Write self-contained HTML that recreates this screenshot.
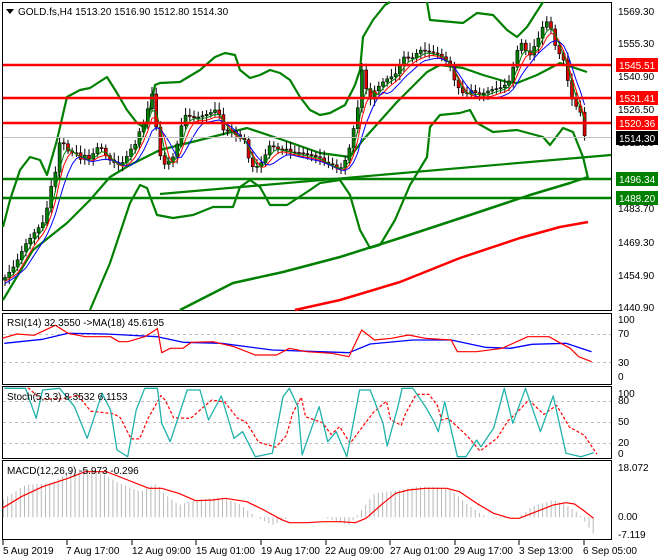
<!DOCTYPE html>
<html><head><meta charset="utf-8"><style>
html,body{margin:0;padding:0;background:#fff;}
svg{display:block;font-family:"Liberation Sans",sans-serif;}
text{font-size:10px;fill:#000;}
</style></head><body>
<svg id="s" width="660" height="560" xmlns="http://www.w3.org/2000/svg">
<rect width="660" height="560" fill="#fff"/>
<rect x="2.5" y="2.5" width="609" height="308" fill="none" stroke="#000"/>
<rect x="2.5" y="313.5" width="609" height="71" fill="none" stroke="#000"/>
<rect x="2.5" y="386.5" width="609" height="72" fill="none" stroke="#000"/>
<rect x="2.5" y="460.5" width="609" height="79" fill="none" stroke="#000"/>
<g id="main"></g>
<line x1="3" y1="137.5" x2="611" y2="137.5" stroke="#c0c0c0"/>
<g stroke="#f00" stroke-width="2.5">
<line x1="3" y1="65" x2="611" y2="65"/><line x1="3" y1="98" x2="611" y2="98"/><line x1="3" y1="123" x2="611" y2="123"/>
</g>
<g stroke="#008000" stroke-width="2.5">
<line x1="3" y1="179" x2="611" y2="179"/><line x1="3" y1="198" x2="611" y2="198"/>
</g>
<g>
<text x="618" y="15">1569.30</text><text x="618" y="47">1555.30</text><text x="618" y="80">1540.90</text>
<text x="618" y="113">1526.50</text><text x="618" y="146">1512.10</text><text x="618" y="212">1483.70</text>
<text x="618" y="246">1469.30</text><text x="618" y="279">1454.90</text><text x="618" y="311">1440.90</text>
<rect x="616" y="58" width="42" height="14" fill="#f00"/><text x="619" y="69" style="fill:#fff">1545.51</text>
<rect x="616" y="91" width="42" height="14" fill="#f00"/><text x="619" y="102" style="fill:#fff">1531.41</text>
<rect x="616" y="116" width="42" height="14" fill="#f00"/><text x="619" y="127" style="fill:#fff">1520.36</text>
<rect x="616" y="131" width="42" height="14" fill="#000"/><text x="619" y="142" style="fill:#fff">1514.30</text>
<rect x="616" y="172" width="42" height="14" fill="#008000"/><text x="619" y="183" style="fill:#fff">1496.34</text>
<rect x="616" y="191" width="42" height="14" fill="#008000"/><text x="619" y="202" style="fill:#fff">1488.20</text>
</g>
<path d="M6 9 L14 9 L10 14 Z" fill="#000"/>
<text x="18" y="15">GOLD.fs,H4  1513.20 1516.90 1512.80 1514.30</text>
<g stroke="#c0c0c0" stroke-dasharray="3,3"><line x1="3" y1="334.5" x2="611" y2="334.5"/><line x1="3" y1="362.5" x2="611" y2="362.5"/>
<line x1="3" y1="401.5" x2="611" y2="401.5"/><line x1="3" y1="422.5" x2="611" y2="422.5"/><line x1="3" y1="443.5" x2="611" y2="443.5"/></g>
<g id="sub"></g>
<text x="7" y="326">RSI(14) 32.3550  -&gt;MA(18) 45.6195</text>
<text x="7" y="400">Stoch(5,3,3) 8.3532 6.1153</text>
<text x="7" y="474">MACD(12,26,9) -5.973 -0.296</text>
<g>
<text x="618" y="323">100</text><text x="618" y="337">70</text><text x="618" y="366">30</text><text x="618" y="380">0</text>
<text x="618" y="397">100</text><text x="618" y="404">80</text><text x="618" y="425">50</text><text x="618" y="446">20</text><text x="618" y="457">0</text>
<text x="618" y="471">18.072</text><text x="618" y="520">0.00</text><text x="618" y="538">-7.119</text>
</g>
<g stroke="#000"><line x1="3" y1="540" x2="3" y2="545"/><line x1="67" y1="540" x2="67" y2="545"/><line x1="132" y1="540" x2="132" y2="545"/><line x1="196" y1="540" x2="196" y2="545"/><line x1="261" y1="540" x2="261" y2="545"/><line x1="326" y1="540" x2="326" y2="545"/><line x1="390" y1="540" x2="390" y2="545"/><line x1="455" y1="540" x2="455" y2="545"/><line x1="519" y1="540" x2="519" y2="545"/><line x1="584" y1="540" x2="584" y2="545"/></g>
<g><text x="3" y="554">5 Aug 2019</text><text x="66" y="554">7 Aug 17:00</text><text x="132" y="554">12 Aug 09:00</text>
<text x="196" y="554">15 Aug 01:00</text><text x="261" y="554">19 Aug 17:00</text><text x="325" y="554">22 Aug 09:00</text>
<text x="390" y="554">27 Aug 01:00</text><text x="454" y="554">29 Aug 17:00</text><text x="519" y="554">3 Sep 13:00</text><text x="583" y="554">6 Sep 05:00</text></g>
</svg>
<script>
var NS="http://www.w3.org/2000/svg";
function el(p,t,a){var e=document.createElementNS(NS,t);for(var k in a)e.setAttribute(k,a[k]);p.appendChild(e);return e;}
function interp(pts,x){for(var i=0;i<pts.length-1;i++){if(x<=pts[i+1][0]){var a=pts[i],b=pts[i+1],t=(x-a[0])/(b[0]-a[0]||1);return a[1]+(b[1]-a[1])*t;}}return pts[pts.length-1][1];}
function poly(g,pts,c,w,sx,sy,ox,oy,dash){var s=pts.map(function(p){return (p[0]*sx+ox).toFixed(1)+","+(p[1]*sy+oy).toFixed(1)}).join(" ");var a={points:s,fill:"none",stroke:c,"stroke-width":w,"stroke-linejoin":"round"};if(dash)a["stroke-dasharray"]=dash;el(g,"polyline",a);}
var M=document.getElementById("main"),S=document.getElementById("sub");
var price=[[3,280],[15,265],[25,245],[35,232],[45,220],[50,190],[55,175],[60,140],[65,145],[70,155],[75,150],[80,160],[85,155],[90,160],[95,150],[100,145],[105,155],[110,160],[115,163],[120,165],[125,160],[130,150],[135,145],[140,130],[145,120],[150,100],[155,85],[158,190],[160,155],[165,165],[170,160],[175,155],[180,130],[185,115],[195,118],[205,115],[212,112],[218,108],[222,130],[230,130],[240,138],[245,140],[250,165],[255,168],[262,162],[270,145],[280,150],[285,148],[290,152],[300,153],[310,155],[320,158],[325,163],[333,165],[340,170],[348,155],[352,135],[357,115],[362,70],[365,85],[370,100],[375,90],[385,80],[395,75],[405,55],[410,60],[420,50],[430,52],[440,55],[450,65],[455,82],[460,90],[465,95],[470,90],[480,95],[490,90],[500,88],[505,85],[510,80],[515,60],[520,40],[525,50],[530,55],[535,45],[540,35],[545,20],[550,25],[555,45],[560,55],[565,62],[570,95],[575,105],[580,110],[585,138],[588,138]];
var up=[[3,227],[10,200],[20,170],[30,157],[40,160],[47,175],[57,140],[67,97],[80,90],[90,88],[107,77],[117,93],[127,110],[137,123],[145,128],[150,110],[155,85],[160,83],[180,82],[200,70],[215,57],[225,53],[235,55],[240,70],[250,78],[260,75],[270,70],[280,73],[290,80],[300,97],[310,110],[320,115],[330,113],[345,105],[355,85],[360,70],[363,37],[373,20],[385,5],[390,2]];
var up2=[[427,2],[430,20],[463,23],[477,13],[493,15],[507,30],[517,37],[527,27],[543,2]];
var mid=[[3,300],[33,250],[67,223],[90,200],[110,177],[130,165],[160,150],[200,140],[247,128],[283,140],[320,153],[350,157],[363,140],[397,102],[427,72],[440,65],[463,68],[483,75],[507,82],[517,83],[537,75],[560,63],[587,72]];
var lo=[[90,310],[110,263],[130,203],[140,185],[147,188],[157,215],[173,218],[193,215],[213,207],[233,207],[240,187],[250,180],[260,187],[270,205],[287,205],[310,190],[320,183],[340,180],[350,195],[360,230],[370,248],[380,245],[395,220],[410,185],[427,157],[430,127],[440,115],[460,113],[470,110],[477,123],[493,132],[517,130],[543,137],[550,145],[563,128],[573,132],[583,157],[588,178]];
[up,up2,mid,lo].forEach(function(p){poly(M,p,"#008000",2.2,1,1,0,0);});
poly(M,[[160,194],[611,155]],"#008000",2.2,1,1,0,0);
poly(M,[[180,310],[233,283],[283,272],[340,257],[400,238],[470,215],[530,195],[570,183],[588,177]],"#008000",2.5,1,1,0,0);
poly(M,[[295,310],[340,300],[400,282],[460,258],[520,238],[560,227],[588,222]],"#f00",2.5,1,1,0,0);
var prev=interp(price,3),cl=[];
for(var x=5;x<=588;x+=4.2){var c=interp(price,x);cl.push([x,c]);var o=prev;var hi=Math.min(o,c)-3-((x*7)%5),lw=Math.max(o,c)+3+((x*3)%4);
el(M,"line",{x1:x,y1:hi,x2:x,y2:lw,stroke:"#000","stroke-width":1});
var t=Math.min(o,c),h=Math.max(Math.abs(o-c),1);el(M,"rect",{x:x-1.5,y:t,width:3,height:h,fill:c<o?"#008000":"#e00000",stroke:"#000","stroke-width":0.6});prev=c;}
function sm(arr,n,off){var r=[];for(var i=0;i<arr.length;i++){var s=0,k=0;for(var j=Math.max(0,i-n);j<=i;j++){s+=arr[j][1];k++;}r.push([arr[i][0],s/k+off]);}return r;}
poly(M,sm(cl,3,4),"#f00",1,1,1,0,0);poly(M,sm(cl,5,6),"#00f",1,1,1,0,0);poly(M,sm(cl,2,2),"#008000",1,1,1,0,0);
var sx=1/2.35,sy=1/3;
poly(S,[[10,100],[100,88],[160,70],[250,72],[370,80],[430,97],[520,100],[640,120],[820,128],[870,102],[970,90],[1060,90],[1140,112],[1200,115],[1250,103],[1330,100],[1390,125]],"#00f",1.3,sx,sy,0,310);
poly(S,[[5,85],[40,72],[80,76],[130,46],[160,70],[200,80],[260,80],[280,95],[300,95],[340,80],[368,58],[370,55],[380,128],[400,115],[430,115],[450,97],[500,95],[550,110],[600,135],[650,135],[680,115],[720,125],[780,130],[820,140],[850,60],[880,90],[920,85],[960,75],[1000,85],[1060,90],[1075,125],[1120,125],[1180,115],[1240,80],[1290,80],[1340,115],[1360,140],[1390,155]],"#f00",1.2,sx,sy,0,310);
var st=[[10,235],[60,235],[85,325],[100,240],[140,235],[175,290],[205,385],[240,250],[260,300],[275,420],[300,440],[320,300],[340,235],[370,235],[380,340],[400,395],[440,240],[470,240],[490,330],[520,258],[550,385],[570,365],[600,440],[640,430],[665,260],[680,235],[700,290],[710,435],[750,290],[770,395],[790,365],[815,440],[845,240],[870,240],[900,340],[910,408],[935,290],[945,235],[970,235],[1000,290],[1020,335],[1030,365],[1045,275],[1075,440],[1095,440],[1120,390],[1130,410],[1160,355],[1185,235],[1205,340],[1235,235],[1270,365],[1300,258],[1330,430],[1365,440],[1395,428]];
var sd=sm(st,2,0).map(function(p){return [p[0]+8,p[1]];});
poly(S,sd,"#f00",1.2,sx,sy,0,310,"3,2");
poly(S,st,"#20b2aa",1.3,sx,sy,0,310);
var hist=[[5,570],[60,525],[120,520],[170,480],[200,475],[240,490],[280,520],[330,545],[370,520],[380,545],[420,585],[460,570],[520,562],[560,580],[600,620],[640,645],[680,622],[760,622],[820,645],[850,600],[880,550],[940,540],[980,530],[1020,530],[1060,540],[1100,585],[1140,620],[1180,625],[1220,622],[1250,590],[1300,570],[1330,585],[1360,610],[1395,672]];
for(var x=8;x<=1395;x+=9.9){var yy=interp(hist,x);el(S,"line",{x1:(x*sx).toFixed(1),y1:(622*sy+310).toFixed(1),x2:(x*sx).toFixed(1),y2:(yy*sy+310).toFixed(1),stroke:"#b8b8b8","stroke-width":1});}
poly(S,[[5,595],[50,560],[100,530],[160,505],[200,485],[250,485],[300,510],[350,535],[380,535],[420,550],[460,572],[500,570],[530,565],[580,575],[620,600],[660,628],[680,638],[720,638],[760,635],[800,635],[835,638],[860,625],[900,580],[930,550],[960,540],[1000,535],[1050,535],[1080,545],[1120,580],[1160,610],[1200,625],[1220,625],[1260,605],[1300,585],[1330,578],[1350,582],[1370,600],[1395,625]],"#f00",1.2,sx,sy,0,310);
</script>
</body></html>
